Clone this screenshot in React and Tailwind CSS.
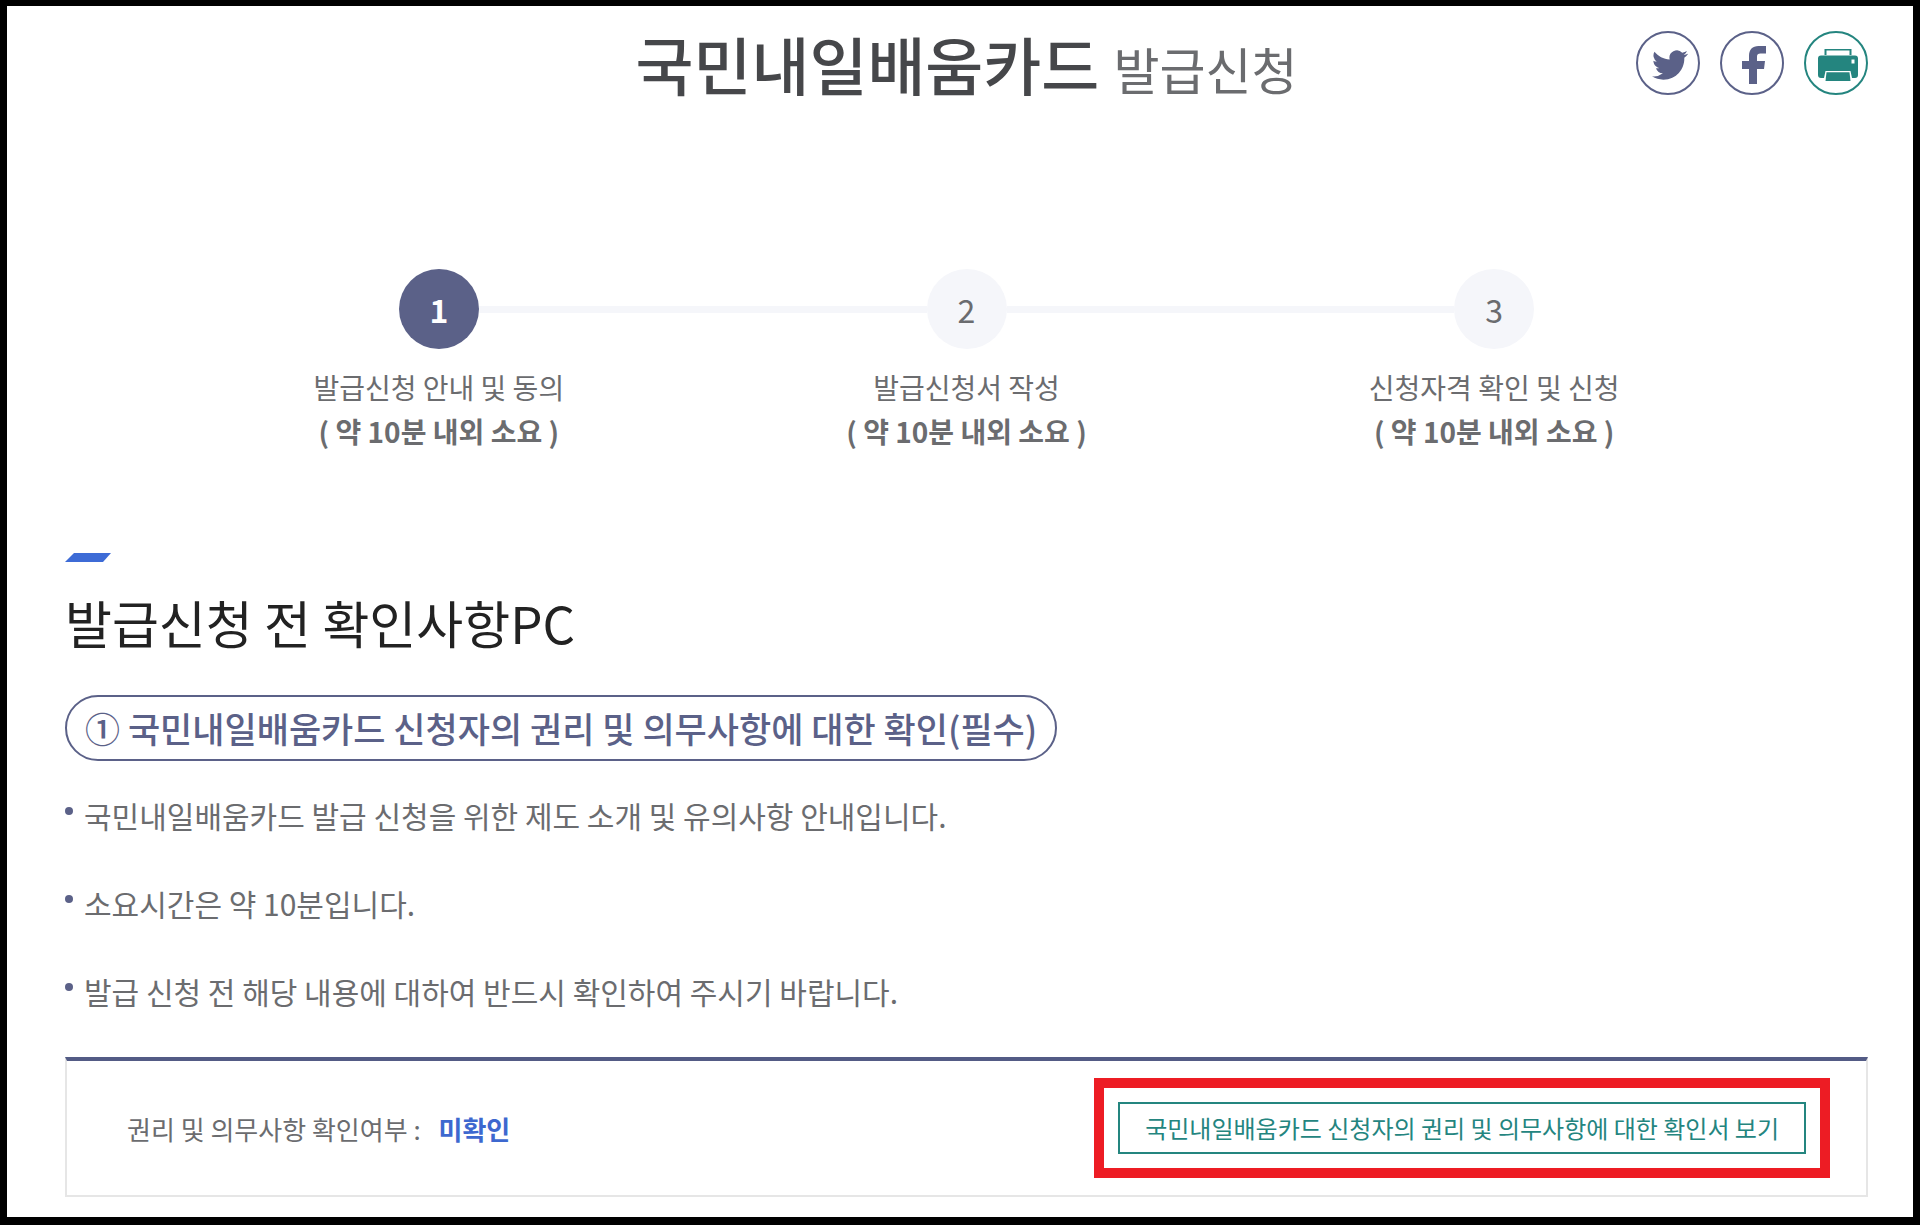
const steps = [
  { no: 1, label: "발급신청 안내 및 동의", time: "( 약 10분 내외 소요 )", active: true },
  { no: 2, label: "발급신청서 작성", time: "( 약 10분 내외 소요 )" },
  { no: 3, label: "신청자격 확인 및 신청", time: "( 약 10분 내외 소요 )" },
];

const notes = [
  "국민내일배움카드 발급 신청을 위한 제도 소개 및 유의사항 안내입니다.",
  "소요시간은 약 10분입니다.",
  "발급 신청 전 해당 내용에 대하여 반드시 확인하여 주시기 바랍니다.",
];

function TwitterIcon() {
  return (
    <svg viewBox="0 0 24 24" className="mt-1 ml-1 size-9" fill="currentColor" aria-hidden="true">
      <path d="M23.95 4.57a10 10 0 0 1-2.82.77 4.96 4.96 0 0 0 2.16-2.72c-.95.55-2 .95-3.13 1.18a4.92 4.92 0 0 0-8.38 4.48C7.69 8.1 4.07 6.13 1.64 3.16a4.93 4.93 0 0 0 1.52 6.57 4.9 4.9 0 0 1-2.23-.61v.06c0 2.39 1.7 4.38 3.95 4.83a5 5 0 0 1-2.21.08 4.94 4.94 0 0 0 4.6 3.42A9.87 9.87 0 0 1 0 19.54a14 14 0 0 0 7.55 2.21c9.05 0 14-7.5 14-13.98 0-.21 0-.42-.02-.63a9.94 9.94 0 0 0 2.46-2.55z" />
    </svg>
  );
}

function FacebookIcon() {
  return (
    <svg viewBox="0 0 24 38" className="mt-1 ml-1 h-[38px] w-6" fill="currentColor" aria-hidden="true">
      <path d="M7 38V23H0v-8h7V10C7 3.500 10.500 0 16.500 0H24V7.500H18.500C16 7.500 15 8.500 15 10.500V15H23L22 23H15V38Z" />
    </svg>
  );
}

function PrinterIcon() {
  return (
    <svg viewBox="0 0 40 32" className="mt-1 ml-1 h-8 w-10" fill="currentColor" aria-hidden="true">
      <path d="M6.500 6V0H33.500V6H31.500V1.500H8.500V6Z" />
      <path fillRule="evenodd" d="M3 6.500H37Q40 6.500 40 9.500V26Q40 29 37 29H34L32.500 22H7.500L6 29H3Q0 29 0 26V9.500Q0 6.500 3 6.500ZM33.500 10.500V14.500H36.500V10.500Z" />
      <path d="M8.500 23.200H31.500L32.500 32H7.500Z" />
    </svg>
  );
}

function RoundButton({ label, className, children }) {
  return (
    <button
      type="button"
      aria-label={label}
      className={"flex size-16 items-center justify-center rounded-full border-2 " + className}
    >
      {children}
    </button>
  );
}

export default function App() {
  return (
    <div className="min-h-screen border-x-[7px] border-t-[6px] border-b-8 border-black bg-white pt-[25px] pr-[45px] pb-[18px] pl-[58px] font-['Noto_Sans_CJK_KR',sans-serif] text-[#6b6c6f]">
      <header className="grid grid-cols-[1fr_auto_1fr] items-center">
        <h1 className="col-start-2 text-[63px] leading-16 font-medium whitespace-nowrap text-[#46474a]">
          국민내일배움카드 <span className="text-[50px] leading-none font-normal text-[#6b6c6f]">발급신청</span>
        </h1>
        <div className="flex justify-end gap-5">
          <RoundButton label="트위터" className="border-[#5b6188] text-[#5b6188]">
            <TwitterIcon />
          </RoundButton>
          <RoundButton label="페이스북" className="border-[#5b6188] text-[#5b6188]">
            <FacebookIcon />
          </RoundButton>
          <RoundButton label="인쇄" className="border-[#24857f] text-[#24857f]">
            <PrinterIcon />
          </RoundButton>
        </div>
      </header>

      <ol className="mx-[110px] mt-[174px] grid grid-cols-3">
        {steps.map((step, i) => (
          <li key={step.no} className="text-center text-[28px] leading-11">
            <div className="mb-4 flex items-center">
              <span className={"h-[7px] flex-1 " + (i > 0 ? "bg-[#f5f6fa]" : "")} />
              <span
                className={
                  "flex size-20 items-center justify-center rounded-full text-[32px] " +
                  (step.active ? "bg-[#5b6188] font-bold text-white" : "bg-[#f5f6fa]")
                }
              >
                {step.no}
              </span>
              <span className={"h-[7px] flex-1 " + (i < steps.length - 1 ? "bg-[#f5f6fa]" : "")} />
            </div>
            <p>{step.label}</p>
            <p className="font-bold">{step.time}</p>
          </li>
        ))}
      </ol>

      <main className="mt-[100px]">
        <svg viewBox="0 0 46 9" className="h-[9px] w-[46px] text-[#3d6bd6]" fill="currentColor" aria-hidden="true">
          <path d="M9 0H46L38 9H0Z" />
        </svg>
        <h2 className="mt-7 text-[51px] leading-16 text-[#222]">발급신청 전 확인사항PC</h2>
        <h3 className="mt-[41px] w-fit rounded-full border-2 border-[#5b6188] px-[18px] text-[35px] leading-[62px] font-medium text-[#5b6188]">
          ① 국민내일배움카드 신청자의 권리 및 의무사항에 대한 확인(필수)
        </h3>
        <ul className="mt-8 flex flex-col gap-11 text-[30px] leading-11">
          {notes.map((note) => (
            <li key={note} className="flex items-start gap-[11px]">
              <span className="mt-[14px] size-2 shrink-0 rounded-full bg-[#5b6188]" />
              {note}
            </li>
          ))}
        </ul>

        <section className="mt-11 flex items-center justify-between border-2 border-t-4 border-[#e6e6e6] border-t-[#535b85] py-[17px] pr-9 pl-[60px]">
          <p className="text-[26px]">
            권리 및 의무사항 확인여부 : <strong className="ml-3 font-bold text-[#3d68cf]">미확인</strong>
          </p>
          <div className="border-10 border-[#ed1c24] p-[14px]">
            <button
              type="button"
              className="block border-2 border-[#24857f] px-[25px] text-[24px] leading-12 text-[#24857f]"
            >
              국민내일배움카드 신청자의 권리 및 의무사항에 대한 확인서 보기
            </button>
          </div>
        </section>
      </main>
    </div>
  );
}
